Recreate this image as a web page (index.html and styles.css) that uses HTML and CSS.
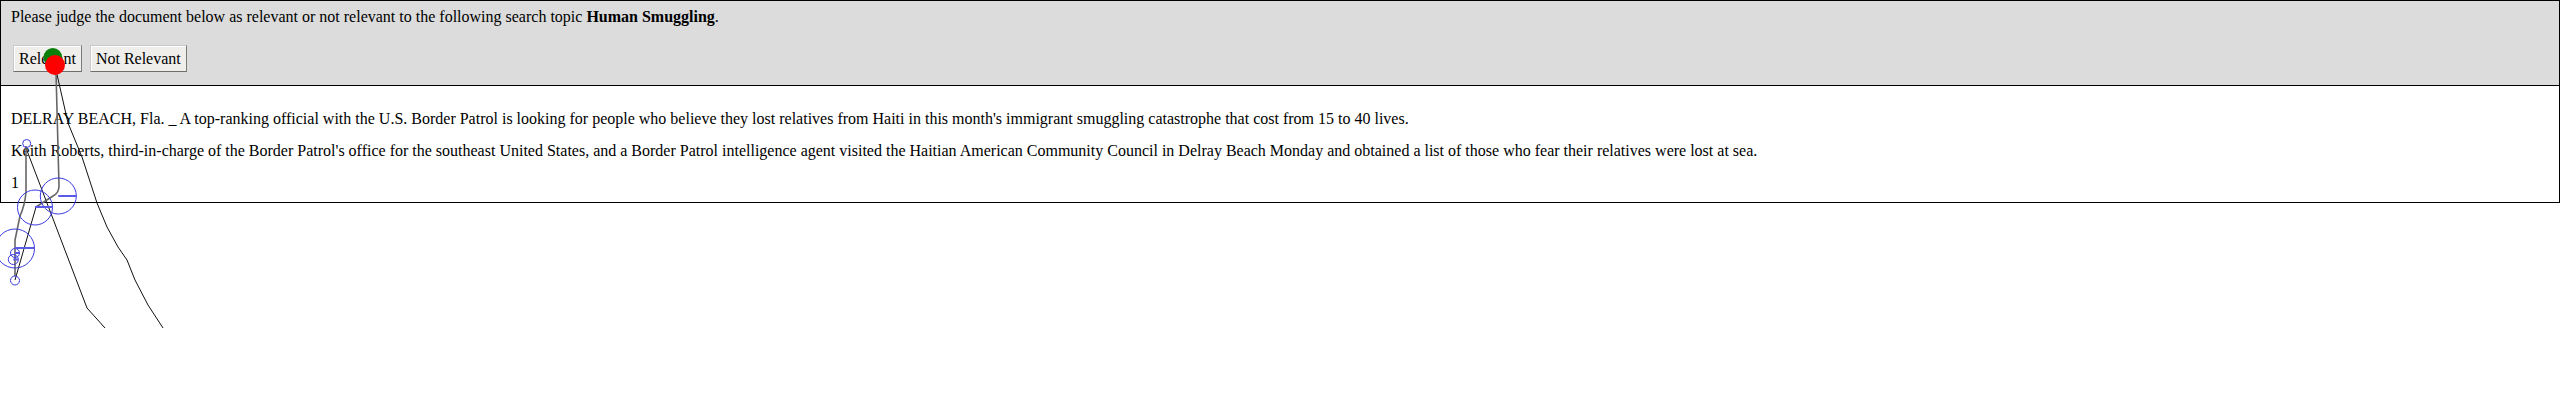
FILE: index.html
```html
<!DOCTYPE html>
<html lang="en">
<head>
<meta charset="utf-8">
<title>Relevance judgment</title>
<link rel="stylesheet" href="styles.css">
</head>
<body>
<div class="judge-box">
  <div class="judge-head">
    <p class="prompt">Please judge the document below as relevant or not relevant to the following search topic <b>Human Smuggling</b>.</p>
    <div class="buttons">
      <button class="btn" type="button">Relevant</button>
      <button class="btn" type="button">Not Relevant</button>
    </div>
  </div>
  <div class="doc">
    <p class="para">DELRAY BEACH, Fla. _ A top-ranking official with the U.S. Border Patrol is looking for people who believe they lost relatives from Haiti in this month's immigrant smuggling catastrophe that cost from 15 to 40 lives.</p>
    <p class="para">Keith Roberts, third-in-charge of the Border Patrol's office for the southeast United States, and a Border Patrol intelligence agent visited the Haitian American Community Council in Delray Beach Monday and obtained a list of those who fear their relatives were lost at sea.</p>
    <div class="page-num">1</div>
  </div>
</div>
<svg class="trace" width="2560" height="400" viewBox="0 0 2560 400" xmlns="http://www.w3.org/2000/svg">
  <g fill="none" stroke="#111" stroke-width="1">
    <polyline points="56,70 68,123 82,157 97,203 107,227 118,247 127,260 135,280 148,305 163,328"/>
    <polyline points="26,148 87,308 105,328"/>
    <polyline points="36,207 15,280"/>
  </g>
  <g fill="none" stroke="#666" stroke-width="1.6">
    <path d="M56 72 L59 186 Q59 193 53 196 L36 207"/>
    <path d="M26 146 L26 192 Q25 205 20 216 L15 240 L15 276"/>
  </g>
  <g fill="none" stroke="#3a3ae0" stroke-width="1">
    <circle cx="26.7" cy="143.5" r="4"/>
    <circle cx="58.3" cy="196" r="18"/>
    <circle cx="35" cy="207.5" r="17.5"/>
    <circle cx="15" cy="248.5" r="19.5"/>
    <circle cx="15" cy="253" r="4.5"/>
    <circle cx="13.3" cy="259.5" r="5"/>
    <circle cx="15" cy="280.5" r="4.5"/>
  </g>
  <g stroke="#5a5ae8" stroke-width="2">
    <line x1="58.3" y1="196" x2="76.3" y2="196"/>
    <line x1="35" y1="207" x2="52.5" y2="207"/>
    <line x1="15" y1="248" x2="34.5" y2="248"/>
    <line x1="15" y1="253" x2="19.5" y2="253"/>
    <line x1="13.3" y1="259.5" x2="18.3" y2="259.5"/>
  </g>
  <circle cx="52.8" cy="57.3" r="9.3" fill="#0a800a"/>
  <circle cx="55" cy="65" r="10" fill="#ff0000"/>
</svg>
</body>
</html>
```

FILE: styles.css
```css
html, body {
  margin: 0;
  padding: 0;
  background: #ffffff;
}

body {
  font-family: "Liberation Serif", "Times New Roman", serif;
  font-size: 16px;
  line-height: 18px;
  color: #000;
  position: relative;
  min-height: 400px;
}

.judge-box {
  box-sizing: border-box;
  width: 2560px;
  border: 1px solid #000;
}

.judge-head {
  background: #dcdcdc;
  border-bottom: 1px solid #000;
  padding: 7px 10px 13px 10px;
}

.prompt {
  margin: 0;
}

.buttons {
  margin-top: 19px;
  height: 27px;
  font-size: 0;
}

.btn {
  font-family: "Liberation Serif", "Times New Roman", serif;
  font-size: 16px;
  line-height: 18px;
  color: #000;
  height: 27px;
  margin: 0 2px;
  padding: 0 5px;
  background: #efeeeb;
  border: 1px solid;
  border-color: #c9c9c9 #7b7b7b #6e6e6e #c9c9c9;
  border-radius: 0;
  box-shadow: inset 1px 1px 0 #ffffff;
  vertical-align: top;
}

.btn + .btn {
  margin-left: 6px;
}

.doc {
  padding: 10px;
}

.para {
  margin: 14px 0;
}

.page-num {
  margin: 0;
}

.trace {
  position: absolute;
  left: 0;
  top: 0;
  width: 2560px;
  height: 400px;
  overflow: visible;
  pointer-events: none;
}
```
